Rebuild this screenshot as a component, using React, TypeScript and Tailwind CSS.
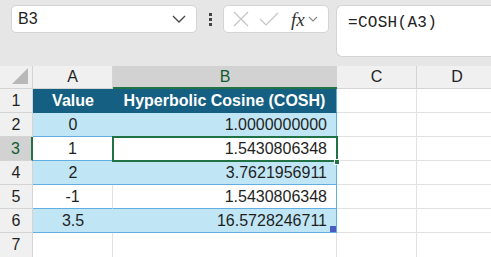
import React from 'react';

const rows = [
  { a: 'Value', b: 'Hyperbolic Cosine (COSH)', head: true },
  { a: '0', b: '1.0000000000', band: true },
  { a: '1', b: '1.5430806348' },
  { a: '2', b: '3.7621956911', band: true },
  { a: '-1', b: '1.5430806348' },
  { a: '3.5', b: '16.5728246711', band: true },
];

const App: React.FC = () => {
  return (
    <div className="w-[491px] h-[257px] overflow-hidden bg-[#e6e6e6] text-[#1f1f1f]" style={{ fontFamily: '"Liberation Sans", Arial, sans-serif' }}>
      {/* formula bar */}
      <div className="flex items-start h-[66px] pt-[5px] pl-[11px]">
        <div className="w-[186px] h-[28px] bg-white rounded-[5px] border border-[#d4d4d4] flex items-center justify-between pl-[6px] pr-[10px]">
          <span className="text-[16px]">B3</span>
          <svg width="14" height="8" viewBox="0 0 14 8"><path d="M1 1 L7 7 L13 1" fill="none" stroke="#444" strokeWidth="1.3" /></svg>
        </div>
        <div className="w-[26px] h-[28px] flex flex-col items-center justify-center gap-[2px]">
          <span className="w-[3px] h-[3px] bg-[#444]" />
          <span className="w-[3px] h-[3px] bg-[#444]" />
          <span className="w-[3px] h-[3px] bg-[#444]" />
        </div>
        <div className="w-[106px] h-[28px] bg-white rounded-[5px] border border-[#d4d4d4] flex items-center pl-[9px] gap-[10px]">
          <svg width="16" height="16" viewBox="0 0 16 16"><path d="M1 1 L15 15 M15 1 L1 15" stroke="#c4c4c4" strokeWidth="1.2" /></svg>
          <svg width="20" height="16" viewBox="0 0 20 16"><path d="M1 8 L7 14 L19 2" fill="none" stroke="#c4c4c4" strokeWidth="1.2" /></svg>
          <span className="flex items-center gap-[3px] ml-[2px]">
            <span className="italic text-[19px] text-[#333] leading-none" style={{ fontFamily: '"Liberation Serif", serif' }}>fx</span>
            <svg width="10" height="6" viewBox="0 0 10 6"><path d="M1 1 L5 5 L9 1" fill="none" stroke="#888" strokeWidth="1.1" /></svg>
          </span>
        </div>
        <div className="ml-[7px] flex-1 h-[52px] bg-white rounded-l-[6px] border border-r-0 border-[#d4d4d4] pl-[11px] pt-[4px]">
          <span className="text-[16px] tracking-[0.3px] text-[#222]" style={{ fontFamily: '"Liberation Mono", monospace' }}>=COSH(A3)</span>
        </div>
      </div>

      {/* grid */}
      <div className="relative bg-white">
        <div className="grid grid-cols-[33px_80px_224px_80px_1fr] grid-rows-[23px_repeat(7,24px)] text-[16px]">
          {/* column header */}
          <div className="bg-[#f0f0f0] border-r border-b border-[#d4d4d4] relative">
            <svg className="absolute right-[4px] bottom-[4px]" width="16" height="16" viewBox="0 0 16 16"><path d="M16 0 L16 16 L0 16 Z" fill="#b8b8b8" /></svg>
          </div>
          <div className="bg-[#f0f0f0] border-r border-b border-[#d4d4d4] flex items-center justify-center">A</div>
          <div className="bg-[#d2d2d2] border-b-2 border-[#217346] flex items-center justify-center text-[#0f5c30]">B</div>
          <div className="bg-[#f0f0f0] border-r border-b border-[#d4d4d4] flex items-center justify-center">C</div>
          <div className="bg-[#f0f0f0] border-b border-[#d4d4d4] flex items-center">
            <span className="w-[80px] text-center">D</span>
          </div>

          {rows.map((r, i) => {
            const n = i + 1;
            const sel = n === 3;
            const bg = r.head ? 'bg-[#156082]' : r.band ? 'bg-[#c0e6f5]' : 'bg-white';
            const lineB = r.head ? 'border-[#156082]' : 'border-[#63aee0]';
            return (
              <React.Fragment key={n}>
                <div className={sel ? 'bg-[#d2d2d2] border-r-2 border-b border-r-[#217346] border-b-[#d4d4d4] flex items-center justify-center text-[#0f5c30]' : 'bg-[#f0f0f0] border-r border-b border-[#d4d4d4] flex items-center justify-center'}>{n}</div>
                <div className={`${bg} border-b ${lineB} ${!r.head && !r.band ? 'border-r border-r-[#e1e1e1]' : ''} flex items-center justify-center ${r.head ? 'text-white font-bold' : ''}`}>{r.a}</div>
                <div className={`${bg} border-b ${lineB} border-r border-r-[#63aee0] flex items-center ${r.head ? 'justify-center text-white font-bold' : 'justify-end pr-[9px]'}`}>{r.b}</div>
                <div className="border-r border-b border-[#e1e1e1]" />
                <div className="border-b border-[#e1e1e1]">
                  <div className="w-[80px] h-full border-r border-[#e1e1e1]" />
                </div>
              </React.Fragment>
            );
          })}

          {/* row 7 */}
          <div className="bg-[#f0f0f0] border-r border-[#d4d4d4] flex items-center justify-center">7</div>
          <div className="border-r border-[#e1e1e1]" />
          <div className="border-r border-[#e1e1e1]" />
          <div className="border-r border-[#e1e1e1]" />
          <div>
            <div className="w-[80px] h-full border-r border-[#e1e1e1]" />
          </div>
        </div>

        {/* active cell B3 */}
        <div className="absolute left-[112px] top-[70px] w-[226px] h-[26px] border-2 border-[#217346] pointer-events-none" />
        <div className="absolute left-[334px] top-[93px] w-[6px] h-[6px] bg-[#217346] border border-white" />
        {/* range end marker */}
        <div className="absolute left-[330px] top-[160px] w-[6px] h-[6px] bg-[#4a5cc0]" />
      </div>
    </div>
  );
};

export default App;
